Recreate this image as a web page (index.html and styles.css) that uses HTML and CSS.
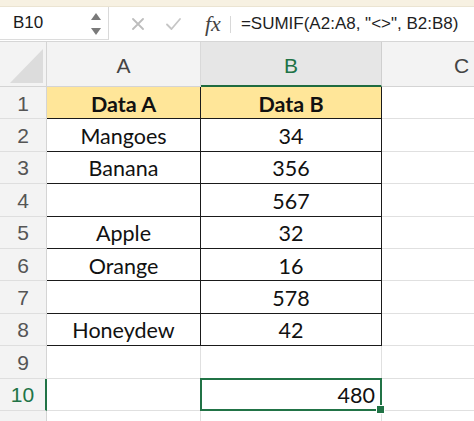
FILE: index.html
```html
<!DOCTYPE html>
<html>
<head>
<meta charset="utf-8">
<link rel="stylesheet" href="styles.css">
</head>
<body>
<div class="app">
  <div class="topstrip"></div>
  <div class="fbar">
    <div class="namebox">
      <span class="nb-text">B10</span>
      <span class="spin">
        <svg width="10" height="22" viewBox="0 0 10 22"><path d="M5 0 L10 7 L0 7 Z" fill="#7a7a7a"/><path d="M0 15 L10 15 L5 22 Z" fill="#7a7a7a"/></svg>
      </span>
    </div>
    <div class="fb-tools">
      <svg class="ic-x" width="12" height="12" viewBox="0 0 12 12"><path d="M1 1 L11 11 M11 1 L1 11" stroke="#bdbdbd" stroke-width="1.8" stroke-linecap="round"/></svg>
      <svg class="ic-ok" width="15" height="12" viewBox="0 0 15 12"><path d="M1 6.5 L5.5 11 L14 1" stroke="#c6c6c6" stroke-width="1.8" fill="none" stroke-linecap="round" stroke-linejoin="round"/></svg>
      <span class="fx">fx</span>
      <span class="sep"></span>
      <span class="formula">=SUMIF(A2:A8, "&lt;&gt;", B2:B8)</span>
    </div>
  </div>
  <div class="sheet">
    <div class="corner"><svg width="47" height="44" viewBox="0 0 47 44"><path d="M10 41 L43 41 L43 7 Z" fill="#dcdcdc"/></svg></div>
    <div class="ch">A</div>
    <div class="ch ch-sel">B</div>
    <div class="ch">C</div>

    <div class="rh">1</div><div class="c t hd">Data A</div><div class="c t hd">Data B</div><div class="c"></div>
    <div class="rh">2</div><div class="c t">Mangoes</div><div class="c t">34</div><div class="c"></div>
    <div class="rh">3</div><div class="c t">Banana</div><div class="c t">356</div><div class="c"></div>
    <div class="rh">4</div><div class="c t"></div><div class="c t">567</div><div class="c"></div>
    <div class="rh">5</div><div class="c t">Apple</div><div class="c t">32</div><div class="c"></div>
    <div class="rh">6</div><div class="c t">Orange</div><div class="c t">16</div><div class="c"></div>
    <div class="rh">7</div><div class="c t"></div><div class="c t">578</div><div class="c"></div>
    <div class="rh">8</div><div class="c t">Honeydew</div><div class="c t">42</div><div class="c"></div>
    <div class="rh">9</div><div class="c"></div><div class="c"></div><div class="c"></div>
    <div class="rh rh-sel">10</div><div class="c"></div><div class="c sel">480</div><div class="c"></div>
    <div class="rh"></div><div class="c"></div><div class="c"></div><div class="c"></div>
  </div>
</div>
</body>
</html>
```

FILE: styles.css
```css
* { box-sizing: border-box; }
html, body { margin: 0; padding: 0; background: #ffffff; }
.app { width: 474px; height: 421px; overflow: hidden; font-family: "Liberation Sans", Arial, sans-serif; }
.topstrip { height: 7px; background: #f7f1e2; border-bottom: 1px solid #ebe4d2; }
.fbar { height: 35px; display: flex; background: #ffffff; border-bottom: 1px solid #d6d6d6; }
.namebox { width: 109px; height: 33px; display: flex; align-items: center; justify-content: space-between; padding: 0 7px 0 13px; border-right: 1px solid #d9d9d9; border-bottom: 1px solid #dcdcdc; }
.nb-text { font-size: 17px; color: #1a1a1a; }
.spin { display: flex; align-items: center; padding-top: 1px; }
.fb-tools { flex: 1; display: flex; align-items: center; padding-left: 23px; }
.ic-x { margin-right: 22px; }
.ic-ok { margin-right: 24px; }
.fx { font-family: "Liberation Serif", "DejaVu Serif", serif; font-style: italic; font-size: 22px; color: #444; margin-right: 9px; }
.sep { width: 1px; height: 17px; background: #d8d8d8; margin-right: 10px; }
.formula { font-size: 17px; color: #1e1e1e; white-space: nowrap; }

.sheet { display: grid; grid-template-columns: 47px 154px 181px 160px; grid-template-rows: 45px repeat(10, 32.4px) 30px; background: #fff; }
.corner { background: #f3f3f3; border-right: 1px solid #d4d4d4; border-bottom: 1px solid #d4d4d4; }
.corner svg { display: block; }
.ch { background: #f3f3f3; border-right: 1px solid #d9d9d9; border-bottom: 1px solid #d4d4d4; display: flex; align-items: center; justify-content: center; font-size: 21px; color: #444; padding-top: 4px; }
.ch-sel { background: #e6e6e6; color: #217346; border-bottom: 2px solid #1f6b3f; border-right-color: #cfcfcf; }
.rh { background: #f3f3f3; border-right: 1px solid #d4d4d4; border-bottom: 1px solid #dedede; display: flex; align-items: center; justify-content: center; font-size: 21px; color: #555; padding-top: 2px; }
.rh-sel { color: #217346; border-right: 2px solid #217346; }
.c { border-right: 1px solid #e0e0e0; border-bottom: 1px solid #e0e0e0; display: flex; align-items: center; justify-content: center; font-family: Lato, "Noto Sans", sans-serif; font-size: 21.5px; color: #111; padding-top: 2px; position: relative; }
.t { border-right-color: #1a1a1a; border-bottom-color: #1a1a1a; }
.hd { background: #ffe699; font-weight: bold; }
.sel { justify-content: flex-end; padding-right: 6px; }
.sel::after { content: ""; position: absolute; top: -1px; left: -1px; right: -1px; bottom: -1px; border: 2px solid #217346; }
.sel::before { content: ""; position: absolute; right: -4px; bottom: -4px; width: 7px; height: 7px; background: #217346; border: 1px solid #fff; z-index: 2; }
```
